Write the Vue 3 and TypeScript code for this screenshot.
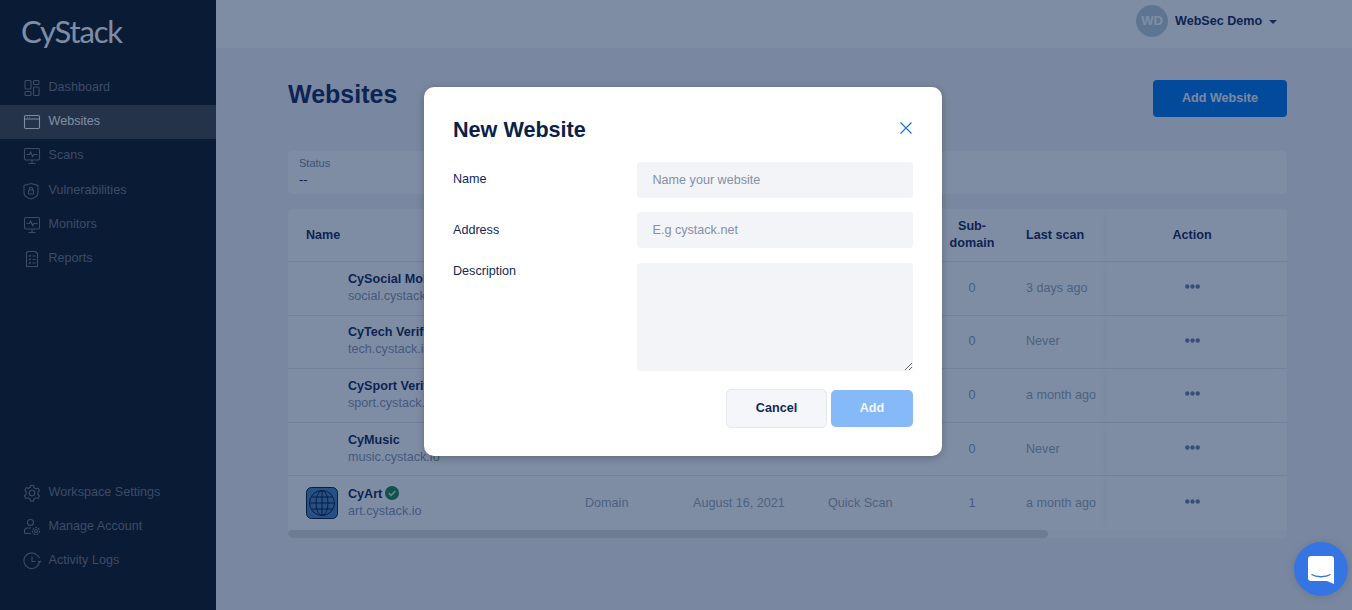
<script setup lang="ts">
const topNav = ['Dashboard', 'Websites', 'Scans', 'Vulnerabilities', 'Monitors', 'Reports']
const bottomNav = ['Workspace Settings', 'Manage Account', 'Activity Logs']

const rows = [
  { name: 'CySocial Mobile', host: 'social.cystack.io', sub: 0, last: '3 days ago', icon: false },
  { name: 'CyTech Verified', host: 'tech.cystack.io', sub: 0, last: 'Never', icon: false },
  { name: 'CySport Verified', host: 'sport.cystack.io', sub: 0, last: 'a month ago', icon: false },
  { name: 'CyMusic', host: 'music.cystack.io', sub: 0, last: 'Never', icon: false },
  { name: 'CyArt', host: 'art.cystack.io', sub: 1, last: 'a month ago', icon: true },
]
</script>

<template>
  <div class="page">
    <aside class="sidebar">
      <div class="logo">CyStack</div>
      <nav class="nav">
        <a v-for="item in topNav" :key="item" class="nav-item" :class="{ active: item === 'Websites' }">
          <svg class="nav-icon" viewBox="0 0 18 18">
            <template v-if="item === 'Dashboard'">
              <rect x="2" y="1.500" width="6" height="8.500" rx="1" />
              <rect x="10.500" y="1.500" width="5.500" height="4" rx="1" />
              <rect x="2" y="12.500" width="6" height="4" rx="1" />
              <rect x="10.500" y="8" width="5.500" height="8.500" rx="1" />
            </template>
            <template v-else-if="item === 'Websites'">
              <rect x="1.500" y="2.500" width="15" height="13" rx="1.500" />
              <path d="M1.500 6h15M4 4.300h.6M6 4.300h.6" />
            </template>
            <template v-else-if="item === 'Vulnerabilities'">
              <path d="M8 1.500 15 3.500v7c0 3-3.500 5.500-7 6.500-3.500-1-7-3.500-7-6.500v-7z" />
              <rect x="5.500" y="8" width="5" height="4" rx=".8" />
              <path d="M6.500 8V6.800a1.500 1.500 0 0 1 3 0V8" />
            </template>
            <template v-else-if="item === 'Reports'">
              <path d="M4.500 1.500h8l2 2v13h-11v-14z" />
              <path d="M6 5.500l.8.800 1-1.300M6 9l.8.800 1-1.300M6 12.500l.8.800 1-1.300M9.500 6h3M9.500 9.500h3M9.500 13h3" />
            </template>
            <template v-else>
              <rect x="1.500" y="1.500" width="15" height="11.500" rx="1.500" />
              <path d="M9 13v3M5.500 16.500h7M3.500 7.500h3l1.200-2.500 2 4.500 1.300-2h3.500" />
            </template>
          </svg>
          <span>{{ item }}</span>
        </a>
      </nav>
      <nav class="nav nav-bottom">
        <a v-for="item in bottomNav" :key="item" class="nav-item">
          <svg class="nav-icon" viewBox="0 0 18 18">
            <template v-if="item === 'Workspace Settings'">
              <path d="M7.500 1.500h3l.5 2.200 1.900 1.100 2.200-.7 1.400 2.600-1.600 1.500v2.200l1.600 1.500-1.400 2.600-2.200-.7-1.900 1.100-.5 2.200h-3l-.5-2.200-1.900-1.100-2.200.7-1.400-2.600 1.600-1.500V7.700L1.900 6.200l1.400-2.600 2.200.7L7.400 3.200z" />
              <circle cx="9" cy="9" r="2.800" />
            </template>
            <template v-else-if="item === 'Manage Account'">
              <circle cx="7.500" cy="4.500" r="3" />
              <path d="M8 10H4.500A3 3 0 0 0 1.500 13v1.500c0 .8.500 1 1 1H8" />
              <circle cx="13" cy="13" r="1.500" />
              <circle cx="13" cy="13" r="3.500" stroke-dasharray="2 1" />
            </template>
            <template v-else>
              <path d="M16.500 9A7.800 7.800 0 1 1 14.500 3.500L16.500 6" />
              <path d="M9 4.500V9.500H12.500M15 9l1.500 1.500L18 9" />
            </template>
          </svg>
          <span>{{ item }}</span>
        </a>
      </nav>
    </aside>

    <div class="main">
      <header class="topbar">
        <div class="avatar">WD</div>
        <span class="user-name">WebSec Demo</span>
        <span class="caret"></span>
      </header>

      <section class="content">
        <div class="heading">
          <h1>Websites</h1>
          <button class="add-btn" type="button">Add Website</button>
        </div>

        <div class="filter">
          <div class="filter-label">Status</div>
          <div class="filter-value">--</div>
        </div>

        <div class="table-card">
          <table>
            <colgroup>
              <col style="width: 279px" />
              <col style="width: 108px" />
              <col style="width: 135px" />
              <col style="width: 130px" />
              <col style="width: 68px" />
              <col style="width: 99px" />
              <col style="width: 180px" />
            </colgroup>
            <thead>
              <tr>
                <th>Name</th>
                <th>Type</th>
                <th>Date</th>
                <th>Profile</th>
                <th class="center tight">Sub-domain</th>
                <th>Last scan</th>
                <th class="center action">Action</th>
              </tr>
            </thead>
            <tbody>
              <tr v-for="row in rows" :key="row.host">
                <td>
                  <div class="site">
                    <div class="site-icon">
                      <svg v-if="row.icon" viewBox="0 0 32 32" width="32" height="32">
                        <rect x=".5" y=".5" width="31" height="31" rx="5" fill="#4f86bf" stroke="#0d1f3f" />
                        <circle cx="16" cy="16" r="12.500" fill="none" stroke="#0d1f3f" />
                        <ellipse cx="16" cy="16" rx="6" ry="12.500" fill="none" stroke="#0d1f3f" />
                        <path d="M16 3.500v25M3.500 16h25M5.500 10h21M5.500 22h21" fill="none" stroke="#0d1f3f" />
                      </svg>
                    </div>
                    <div class="site-text">
                      <div class="site-name">
                        {{ row.name }}
                        <svg v-if="row.icon" class="verified" viewBox="0 0 14 14" width="14" height="14">
                          <circle cx="7" cy="7" r="7" fill="#23884f" />
                          <path d="M3.800 7.200 6.100 9.500 10.300 5" fill="none" stroke="#cfe3d8" stroke-width="1.800" />
                        </svg>
                      </div>
                      <div class="site-host">{{ row.host }}</div>
                    </div>
                  </div>
                </td>
                <td>Domain</td>
                <td>August 16, 2021</td>
                <td>Quick Scan</td>
                <td class="center tight sub-count">{{ row.sub }}</td>
                <td>{{ row.last }}</td>
                <td class="center action">
                  <svg class="dots" viewBox="0 0 15 5" width="15" height="5">
                    <circle cx="2.300" cy="2.500" r="2.200" />
                    <circle cx="7.500" cy="2.500" r="2.200" />
                    <circle cx="12.700" cy="2.500" r="2.200" />
                  </svg>
                </td>
              </tr>
            </tbody>
          </table>
          <div class="scroll-track"><div class="scroll-thumb"></div></div>
        </div>
      </section>
    </div>

    <div class="overlay">
      <div class="modal">
        <div class="modal-head">
          <h2>New Website</h2>
          <button class="close" type="button" aria-label="Close">
            <svg viewBox="0 0 12 12" width="12" height="12">
              <path d="M.5.500l11 11M11.500.500l-11 11" fill="none" stroke="#1f74d6" stroke-width="1.200" />
            </svg>
          </button>
        </div>
        <form class="form" @submit.prevent>
          <label class="label">Name</label>
          <input class="field" type="text" placeholder="Name your website" />
          <label class="label label-address">Address</label>
          <input class="field" type="text" placeholder="E.g cystack.net" />
          <label class="label label-desc">Description</label>
          <textarea class="field area"></textarea>
        </form>
        <div class="modal-foot">
          <button class="btn cancel" type="button">Cancel</button>
          <button class="btn add" type="button">Add</button>
        </div>
      </div>
    </div>

    <div class="chat">
      <svg viewBox="0 0 26 28" width="26" height="28">
        <path d="M3 0h20a3 3 0 0 1 3 3v25l-7-3H3a3 3 0 0 1-3-3V3a3 3 0 0 1 3-3z" fill="#fff" />
        <path d="M3.500 18.500c5 3 14 3 19 0" fill="none" stroke="#3574e3" stroke-width="1.400" />
      </svg>
    </div>
  </div>
</template>

<style scoped>
.page {
  position: relative;
  display: flex;
  height: 100vh;
  overflow: hidden;
  font-family: 'Liberation Sans', Arial, sans-serif;
  font-size: 12.6px;
  color: #223a6b;
  background: #f3f4f7;
}

.sidebar {
  width: 216px;
  flex: none;
  display: flex;
  flex-direction: column;
  background: #141a20;
}

.logo {
  height: 71px;
  padding: 13px 0 0 21px;
  box-sizing: border-box;
  font-family: Lato, sans-serif;
  font-size: 31px;
  line-height: 36px;
  letter-spacing: -1.2px;
  color: #fff;
}

.nav {
  display: flex;
  flex-direction: column;
}

.nav-bottom {
  margin-top: auto;
  margin-bottom: 32px;
}

.nav-item {
  display: flex;
  align-items: center;
  height: 34.2px;
  padding-left: 23px;
  gap: 7.500px;
  color: #787c83;
}

.nav-item span {
  margin-top: -2px;
}

.nav-item.active {
  background: #48484b;
  color: #fff;
}

.nav-icon {
  width: 18px;
  height: 18px;
  flex: none;
  fill: none;
  stroke: #787c83;
  stroke-width: 1.100;
}

.nav-item.active .nav-icon {
  stroke: #fff;
}

.main {
  flex: 1;
  min-width: 0;
}

.topbar {
  height: 48px;
  display: flex;
  align-items: center;
  padding: 0 0 6px 920px;
  box-sizing: border-box;
  background: #fff;
}

.avatar {
  width: 32px;
  height: 32px;
  border-radius: 50%;
  background: #bccfd8;
  color: #fff;
  font-weight: 700;
  font-size: 13px;
  line-height: 32px;
  text-align: center;
}

.user-name {
  margin-left: 7px;
  font-weight: 700;
  color: #1a2b5c;
}

.caret {
  margin-left: 7px;
  border-left: 4px solid transparent;
  border-right: 4px solid transparent;
  border-top: 4px solid #2c3f66;
  margin-top: 2px;
}

.content {
  width: 999px;
  margin-left: 72px;
}

.heading {
  display: flex;
  justify-content: space-between;
  align-items: flex-start;
  height: 37px;
  margin-top: 32px;
}

h1 {
  margin: 0;
  font-size: 25px;
  line-height: 29px;
  font-weight: 700;
  color: #1a2b5c;
}

.add-btn {
  width: 134px;
  height: 37px;
  padding: 0 0 2px;
  border: 0;
  border-radius: 4px;
  background: #0878eb;
  color: #f0f4f8;
  font: 700 12.6px 'Liberation Sans', Arial, sans-serif;
}

.filter {
  height: 43px;
  margin-top: 34px;
  padding: 5px 11px;
  box-sizing: border-box;
  background: #fff;
  border-radius: 5px;
}

.filter-label {
  font-size: 11px;
  line-height: 14px;
  color: #6f85a6;
}

.filter-value {
  margin-top: 1px;
  font-size: 13px;
  line-height: 17px;
  color: #1a2b5c;
}

.table-card {
  margin-top: 15px;
  border-radius: 5px;
  overflow: hidden;
}

table {
  width: 999px;
  table-layout: fixed;
  border-collapse: separate;
  border-spacing: 0;
  background: #fff;
}

th,
td {
  box-sizing: border-box;
  padding: 0 0 1px 18px;
  text-align: left;
  overflow: hidden;
  white-space: nowrap;
  border-bottom: 1px solid #e6e9ef;
}

th {
  height: 53px;
  padding-bottom: 0;
  font-weight: 700;
  line-height: 17px;
  color: #1a2b5c;
}

td {
  height: 53.600px;
  color: #9aa5b5;
}

tbody tr:last-child td {
  border-bottom: 0;
}

th.tight,
td.tight {
  padding: 0 4px 1px 0;
  white-space: normal;
}

th.tight {
  padding-bottom: 0;
}

.center {
  text-align: center;
}

.sub-count {
  color: #8a9cbb;
}

th.action,
td.action {
  padding: 0 10px 1px 0;
  box-shadow: -5px 0 10px -3px rgba(0, 0, 0, 0.05);
}

th.action {
  padding-bottom: 0;
}

.site {
  display: flex;
  align-items: center;
  gap: 10px;
}

.site-icon {
  width: 32px;
  height: 32px;
  flex: none;
}

.site-name {
  display: flex;
  align-items: center;
  gap: 3px;
  font-weight: 700;
  line-height: 17px;
  color: #1a2b5c;
}

.site-host {
  line-height: 17px;
  color: #8c94b3;
}

.verified {
  margin-top: -3px;
}

.dots {
  display: block;
  margin: -2px auto 0;
  fill: #7482a7;
}

.scroll-track {
  height: 8px;
  background: #f8f8fa;
}

.scroll-thumb {
  width: 760px;
  height: 8px;
  border-radius: 4px;
  background: #dcdcdc;
}

.overlay {
  position: absolute;
  inset: 0;
  display: flex;
  justify-content: center;
  align-items: flex-start;
  padding: 87px 0 0 14px;
  box-sizing: border-box;
  background: rgba(0, 28, 73, 0.5);
}

.modal {
  width: 518px;
  height: 369px;
  padding: 29px;
  box-sizing: border-box;
  background: #fff;
  border-radius: 10px;
  box-shadow: 0 2px 8px rgba(0, 0, 0, 0.25);
}

.modal-head {
  display: flex;
  justify-content: space-between;
  align-items: center;
  height: 28px;
}

h2 {
  margin: 0;
  font-size: 21.600px;
  line-height: 28px;
  font-weight: 700;
  color: #0a2147;
}

.close {
  padding: 0;
  border: 0;
  background: none;
  height: 12px;
  margin-top: -4px;
  margin-right: 1px;
}

.close svg {
  display: block;
}

.form {
  display: grid;
  grid-template-columns: 184px 1fr;
  row-gap: 14px;
  margin-top: 18px;
}

.label {
  padding-top: 9px;
  line-height: 16px;
  color: #0f2a55;
}

.label-address {
  padding-top: 10px;
}

.label-desc {
  padding-top: 1px;
}

.field {
  display: block;
  width: 100%;
  height: 36px;
  padding: 0 15.500px 1px;
  box-sizing: border-box;
  border: 0;
  border-radius: 4px;
  outline: 0;
  background: #f3f4f8;
  font: 12.6px 'Liberation Sans', Arial, sans-serif;
  color: #0f2a55;
}

.field::placeholder {
  color: #858fa5;
  opacity: 1;
}

.area {
  height: 108px;
  margin-top: 1px;
  padding: 10px 15px;
}

.modal-foot {
  display: flex;
  justify-content: flex-end;
  align-items: center;
  gap: 4px;
  margin-top: 18px;
}

.btn {
  padding: 0 0 2px;
  border-radius: 5px;
  font: 700 12.6px 'Liberation Sans', Arial, sans-serif;
}

.cancel {
  width: 101px;
  height: 39px;
  border: 1px solid #e4e7ec;
  background: #f5f6f9;
  color: #0f2a55;
}

.add {
  width: 82px;
  height: 37px;
  border: 0;
  background: #85b9f7;
  color: #f2f7fe;
}

.chat {
  position: absolute;
  left: 1294px;
  top: 542px;
  width: 54px;
  height: 54px;
  display: flex;
  align-items: center;
  justify-content: center;
  border-radius: 50%;
  background: #3574e3;
  box-shadow: 0 1px 10px rgba(0, 0, 0, 0.12);
}

.chat svg {
  margin-top: 1px;
}
</style>
